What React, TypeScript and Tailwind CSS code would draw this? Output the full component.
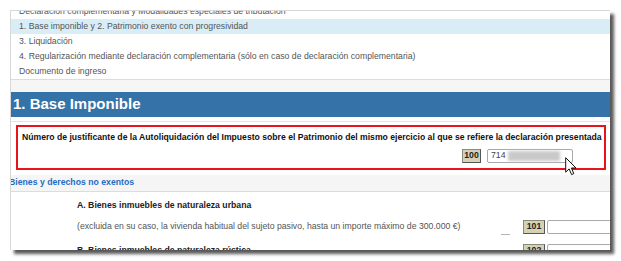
const NAV = [
  "Declaración complementaria y Modalidades especiales de tributación",
  "1. Base imponible y 2. Patrimonio exento con progresividad",
  "3. Liquidación",
  "4. Regularización mediante declaración complementaria (sólo en caso de declaración complementaria)",
  "Documento de ingreso",
]

function Casilla({ n, w }: { n: string; w: string }) {
  return (
    <div
      className={`${w} h-[14px] shrink-0 flex items-center justify-center bg-[#d5d1b6] border border-[#555] border-t-[#8a8a7a] border-l-[#8a8a7a] text-[8.7px] font-bold text-[#222]`}
    >
      {n}
    </div>
  )
}

function Cursor() {
  return (
    <svg width="12" height="19" viewBox="0 0 12 19" className="absolute left-[554px] top-[146px]">
      <path
        d="M0.7 0.7 L0.7 15.2 L4.1 11.9 L6.6 17.6 L8.8 16.6 L6.4 11 L11 11 Z"
        fill="#fff"
        stroke="#111"
        strokeWidth="1"
        strokeLinejoin="round"
      />
    </svg>
  )
}

export default function App() {
  return (
    <div className="w-[621px] h-[261px] overflow-hidden bg-white pt-[10px] pl-[10px] font-['Liberation_Sans',Arial,sans-serif]">
      <div className="relative w-[600px] h-[240px] overflow-hidden bg-white border-l border-t border-[#d8d8d8] shadow-[4px_4px_3px_rgba(0,0,0,0.65)]">

        {/* apartados */}
        <div className="-mt-[7px] border-b border-[#dcdcdc] text-[8.7px] text-[#555]">
          {NAV.map((t, i) => (
            <div key={i} className={i === 1 ? "h-[15px] flex items-center pl-[8px] bg-[#d9edf7]" : "h-[15px] flex items-center pl-[8px]"}>
              {t}
            </div>
          ))}
        </div>
        <div className="h-[12px] bg-[#f6f6f6]" />

        {/* cabecera */}
        <div className="h-[25px] flex items-center pl-[2px] bg-[#3572a7] text-[15px] font-bold text-white">
          1. Base Imponible
        </div>
        <div className="h-[4px]" />

        <div className="border-t border-[#e3e3e3] pt-[3px]">
          <div className="ml-[5px] w-[590px] h-[45px] border-2 border-[#e8141c] pt-[5px] pl-[4px]">
            <p className="text-[8.65px] leading-[11px] font-bold text-[#111] whitespace-nowrap">
              Número de justificante de la Autoliquidación del Impuesto sobre el Patrimonio del mismo ejercicio al que se refiere la declaración presentada
            </p>
            <div className="mt-[6px] flex items-center justify-end gap-[6px] pr-[31px]">
              <Casilla n="100" w="w-[19px]" />
              <div className="w-[86px] h-[14px] flex items-center pl-[3px] bg-white border border-[#a9a9a9] rounded-[2px] text-[8.7px] text-[#444]">
                <span>714</span>
                <span className="ml-[2px] w-[52px] h-[10px] bg-[#c9c9c9] blur-[1.5px]" />
              </div>
            </div>
          </div>
        </div>

        {/* bienes y derechos */}
        <div className="mt-[5px] h-[17px] flex items-center -ml-[2px] bg-[#f5f5f5] border-b border-[#dcdcdc] text-[8.7px] font-bold text-[#1f6cc4]">
          Bienes y derechos no exentos
        </div>

        <div className="pl-[66px] pt-[8px] text-[8.7px] leading-[11px] font-bold text-[#222]">
          A. Bienes inmuebles de naturaleza urbana
        </div>
        <div className="mt-[9px] h-[14px] flex items-center pl-[66px]">
          <span className="w-[424px] shrink-0 text-[8.7px] text-[#555]">
            (excluida en su caso, la vivienda habitual del sujeto pasivo, hasta un importe máximo de 300.000 €)
          </span>
          <span className="w-[9px] h-px shrink-0 self-end -mb-px bg-[#b5b5b5]" />
          <div className="ml-[13px] flex gap-[2px]">
            <Casilla n="101" w="w-[22px]" />
            <div className="w-[80px] h-[14px] shrink-0 bg-white border border-[#a9a9a9] rounded-[2px]" />
          </div>
        </div>
        <div className="mt-[10px] h-[14px] flex items-center pl-[66px]">
          <span className="w-[446px] shrink-0 text-[8.7px] font-bold text-[#222]">
            B. Bienes inmuebles de naturaleza rústica
          </span>
          <div className="flex gap-[2px]">
            <Casilla n="102" w="w-[22px]" />
            <div className="w-[80px] h-[14px] shrink-0 bg-white border border-[#a9a9a9] rounded-[2px]" />
          </div>
        </div>

        <Cursor />
      </div>
    </div>
  )
}
